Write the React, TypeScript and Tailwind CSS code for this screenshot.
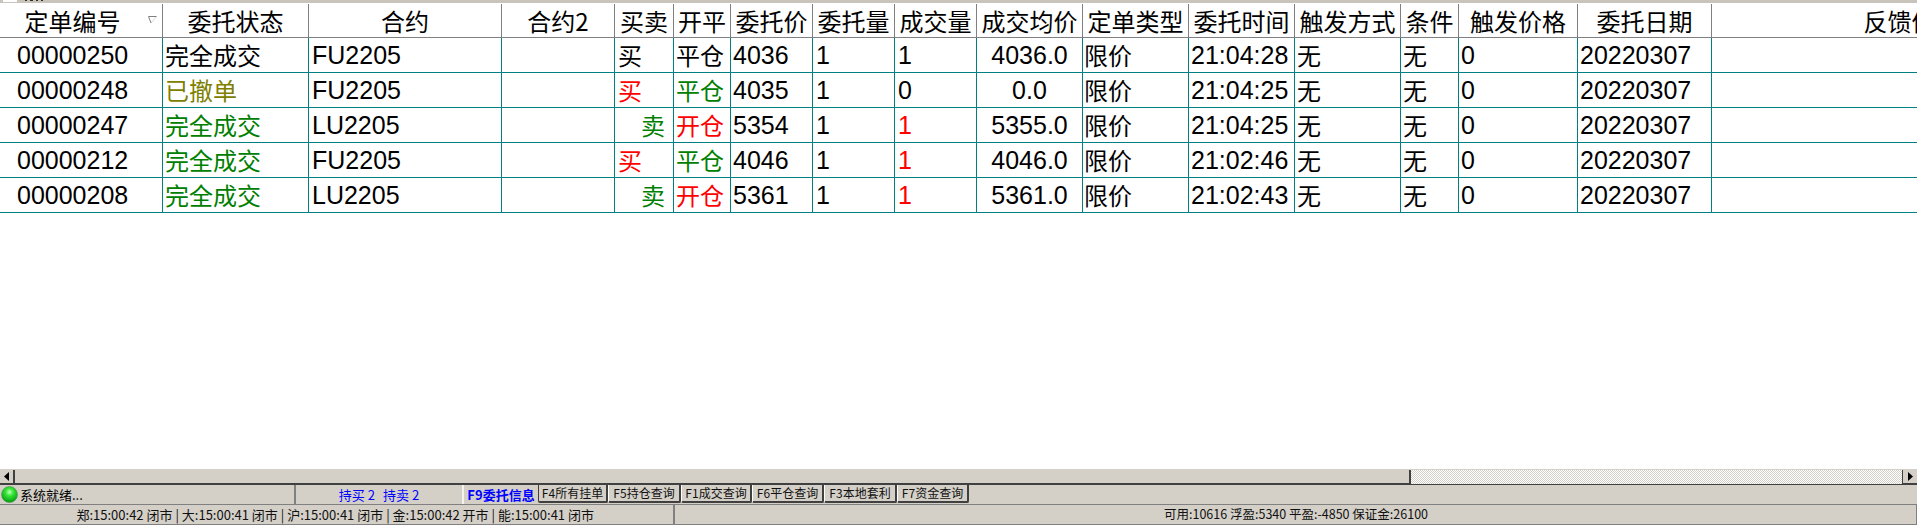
const columns = 'grid-cols-[163px_146px_193px_113px_59px_57px_82px_82px_82px_106px_106px_106px_106px_58px_119px_134px_400px]'

const headers = [
  '定单编号', '委托状态', '合约', '合约2', '买卖', '开平', '委托价', '委托量', '成交量',
  '成交均价', '定单类型', '委托时间', '触发方式', '条件', '触发价格', '委托日期', '反馈信息',
]

const GREEN = 'text-[#008000]'
const RED = 'text-[#ff0000]'
const OLIVE = 'text-[#808000]'
const BLACK = 'text-black'

const rows = [
  { id: '00000250', status: '完全成交', statusColor: BLACK, code: 'FU2205', side: '买', sideColor: BLACK, open: '平仓', openColor: BLACK, price: '4036', filled: '1', filledColor: BLACK, avg: '4036.0', time: '21:04:28' },
  { id: '00000248', status: '已撤单', statusColor: OLIVE, code: 'FU2205', side: '买', sideColor: RED, open: '平仓', openColor: GREEN, price: '4035', filled: '0', filledColor: BLACK, avg: '0.0', time: '21:04:25' },
  { id: '00000247', status: '完全成交', statusColor: GREEN, code: 'LU2205', side: '卖', sideColor: GREEN, open: '开仓', openColor: RED, price: '5354', filled: '1', filledColor: RED, avg: '5355.0', time: '21:04:25' },
  { id: '00000212', status: '完全成交', statusColor: GREEN, code: 'FU2205', side: '买', sideColor: RED, open: '平仓', openColor: GREEN, price: '4046', filled: '1', filledColor: RED, avg: '4046.0', time: '21:02:46' },
  { id: '00000208', status: '完全成交', statusColor: GREEN, code: 'LU2205', side: '卖', sideColor: GREEN, open: '开仓', openColor: RED, price: '5361', filled: '1', filledColor: RED, avg: '5361.0', time: '21:02:43' },
]

const tabs = [
  { label: 'F4所有挂单', width: 'w-[70px]', left: 'border-l-[#404040]' },
  { label: 'F5持仓查询', width: 'w-[73px]', left: 'border-l-[#ffffff]' },
  { label: 'F1成交查询', width: 'w-[71px]', left: 'border-l-[#ffffff]' },
  { label: 'F6平仓查询', width: 'w-[72px]', left: 'border-l-[#ffffff]' },
  { label: 'F3本地套利', width: 'w-[73px]', left: 'border-l-[#ffffff]' },
  { label: 'F7资金查询', width: 'w-[72px]', left: 'border-l-[#ffffff]' },
]

const Cell = ({ children, className = '' }: { children?: React.ReactNode; className?: string }) => (
  <div className={`flex items-center overflow-hidden whitespace-nowrap border-r border-[#008080] ${className}`}>
    {children}
  </div>
)

const Arrow = ({ right = false }: { right?: boolean }) => (
  <svg width="5" height="9" viewBox="0 0 5 9">
    <path d={right ? 'M0 0 L5 4.5 L0 9 Z' : 'M5 0 L0 4.5 L5 9 Z'} fill="#000" />
  </svg>
)

const Led = () => (
  <svg width="17" height="17" viewBox="0 0 17 17">
    <defs>
      <radialGradient id="led" cx="50%" cy="35%" r="65%">
        <stop offset="0%" stopColor="#c8ffc0" />
        <stop offset="35%" stopColor="#38e838" />
        <stop offset="100%" stopColor="#009a10" />
      </radialGradient>
    </defs>
    <circle cx="8.5" cy="8.5" r="8" fill="url(#led)" stroke="#5a8f5a" strokeWidth="0.6" />
  </svg>
)

const App = () => {
  const latin = "pt-[2px] font-['Liberation_Sans',sans-serif] text-[25px]"
  return (
    <div className="flex h-[525px] w-[1917px] flex-col overflow-hidden bg-white font-['Noto_Sans_CJK_SC','Liberation_Sans',sans-serif] text-[24px] text-black">
      {/* toolbar above, almost scrolled out of view */}
      <div className="flex h-[3px] shrink-0 gap-[3px] bg-[#c8c4bc] pl-[3px]">
        <div className="mr-[5px] h-[2px] w-[14px] bg-white" />
        <div className="h-[1px] w-[2px] bg-[#303030]" />
        <div className="h-[1px] w-[3px] bg-[#303030]" />
        <div className="h-[1px] w-[2px] bg-[#303030]" />
        <div className="h-[1px] w-[2px] bg-[#303030]" />
      </div>

      <div className={`grid h-[35px] w-max shrink-0 border-b border-[#808080] pt-[1px] ${columns}`}>
        {headers.map((title, i) => (
          <div
            key={title}
            className={`relative flex items-center justify-center overflow-hidden whitespace-nowrap border-r border-[#808080] ${i === 0 ? 'pr-[17px]' : ''}`}
          >
            {title}
            {i === 0 && (
              <svg className="absolute left-[148px] top-[12px]" width="9" height="8" viewBox="0 0 9 8">
                <path d="M3 7 L8.5 0.5" fill="none" stroke="#d8d8d8" />
                <path d="M8.5 0.5 H0.5 L3 7" fill="none" stroke="#808080" />
              </svg>
            )}
          </div>
        ))}
      </div>

      {rows.map((row) => (
        <div key={row.id} className={`grid h-[35px] w-max shrink-0 border-b border-[#008080] ${columns}`}>
          <Cell className={`pl-[17px] ${latin}`}>{row.id}</Cell>
          <Cell className={`pl-[2px] ${row.statusColor}`}>{row.status}</Cell>
          <Cell className={`pl-[3px] ${latin}`}>{row.code}</Cell>
          <Cell />
          <Cell className={`${row.side === '卖' ? 'justify-end pr-[8px]' : 'pl-[3px]'} ${row.sideColor}`}>{row.side}</Cell>
          <Cell className={`pl-[2px] ${row.openColor}`}>{row.open}</Cell>
          <Cell className={`pl-[2px] ${latin}`}>{row.price}</Cell>
          <Cell className={`pl-[3px] ${latin}`}>1</Cell>
          <Cell className={`pl-[3px] ${latin} ${row.filledColor}`}>{row.filled}</Cell>
          <Cell className={`justify-center ${latin}`}>{row.avg}</Cell>
          <Cell className="pl-[1px]">限价</Cell>
          <Cell className={`pl-[2px] ${latin}`}>{row.time}</Cell>
          <Cell className="pl-[2px]">无</Cell>
          <Cell className="pl-[2px]">无</Cell>
          <Cell className={`pl-[2px] ${latin}`}>0</Cell>
          <Cell className={`pl-[2px] ${latin}`}>20220307</Cell>
          <Cell />
        </div>
      ))}

      <div className="min-h-0 flex-1" />

      {/* horizontal scrollbar */}
      <div className="flex h-[16px] shrink-0 border-t border-[#d4d0c8]">
        <div className="flex w-[15px] items-center justify-center border-b-2 border-r-2 border-[#404040] bg-[#d4d0c8]">
          <Arrow />
        </div>
        <div className="w-[1396px] border-b-2 border-r-2 border-[#404040] bg-[#d4d0c8]" />
        <div className="flex-1 border-b border-[#404040] bg-[repeating-conic-gradient(#d4d0c8_0_25%,#ffffff_0_50%)] bg-[length:2px_2px]" />
        <div className="flex w-[15px] items-center justify-center border-b-2 border-l border-[#404040] bg-[#d4d0c8]">
          <Arrow right />
        </div>
      </div>

      {/* status row with tabs */}
      <div className="flex h-[20px] shrink-0 items-stretch border-b border-[#808080] bg-[#d4d0c8] text-[13px] leading-none">
        <div className="flex w-[296px] items-center gap-[2px] border-r-2 border-[#808080] pl-[1px]">
          <Led />
          <span className="text-black">系统就绪...</span>
        </div>
        <div className="flex w-[166px] items-center justify-center gap-[8px] text-[#0000ff]">
          <span>持买 2</span>
          <span>持卖 2</span>
        </div>
        <div className="flex w-[76px] items-center justify-center border-l-2 border-[#f4f2ec] font-bold text-[#0000ff]">
          F9委托信息
        </div>
        {tabs.map((tab) => (
          <div
            key={tab.label}
            className={`mb-[1px] flex items-center justify-center rounded-b-[2px] border-b-2 border-l border-r-2 border-b-[#404040] border-r-[#404040] text-[12px] text-[#101010] ${tab.left} ${tab.width}`}
          >
            {tab.label}
          </div>
        ))}
      </div>

      {/* market and account status */}
      <div className="flex h-[20px] shrink-0 items-center border-b border-[#808080] bg-[#d4d0c8] text-[13px] leading-none text-[#101010]">
        <div className="flex h-full w-[675px] items-center justify-end border-r-2 border-[#808080] pr-[79px]">
          郑:15:00:42 闭市 | 大:15:00:41 闭市 | 沪:15:00:41 闭市 | 金:15:00:42 开市 | 能:15:00:41 闭市
        </div>
        <div className="flex h-full flex-1 items-center border-r border-[#808080] pl-[489px] text-[12.5px]">
          可用:10616 浮盈:5340 平盈:-4850 保证金:26100
        </div>
      </div>
    </div>
  )
}

export default App
